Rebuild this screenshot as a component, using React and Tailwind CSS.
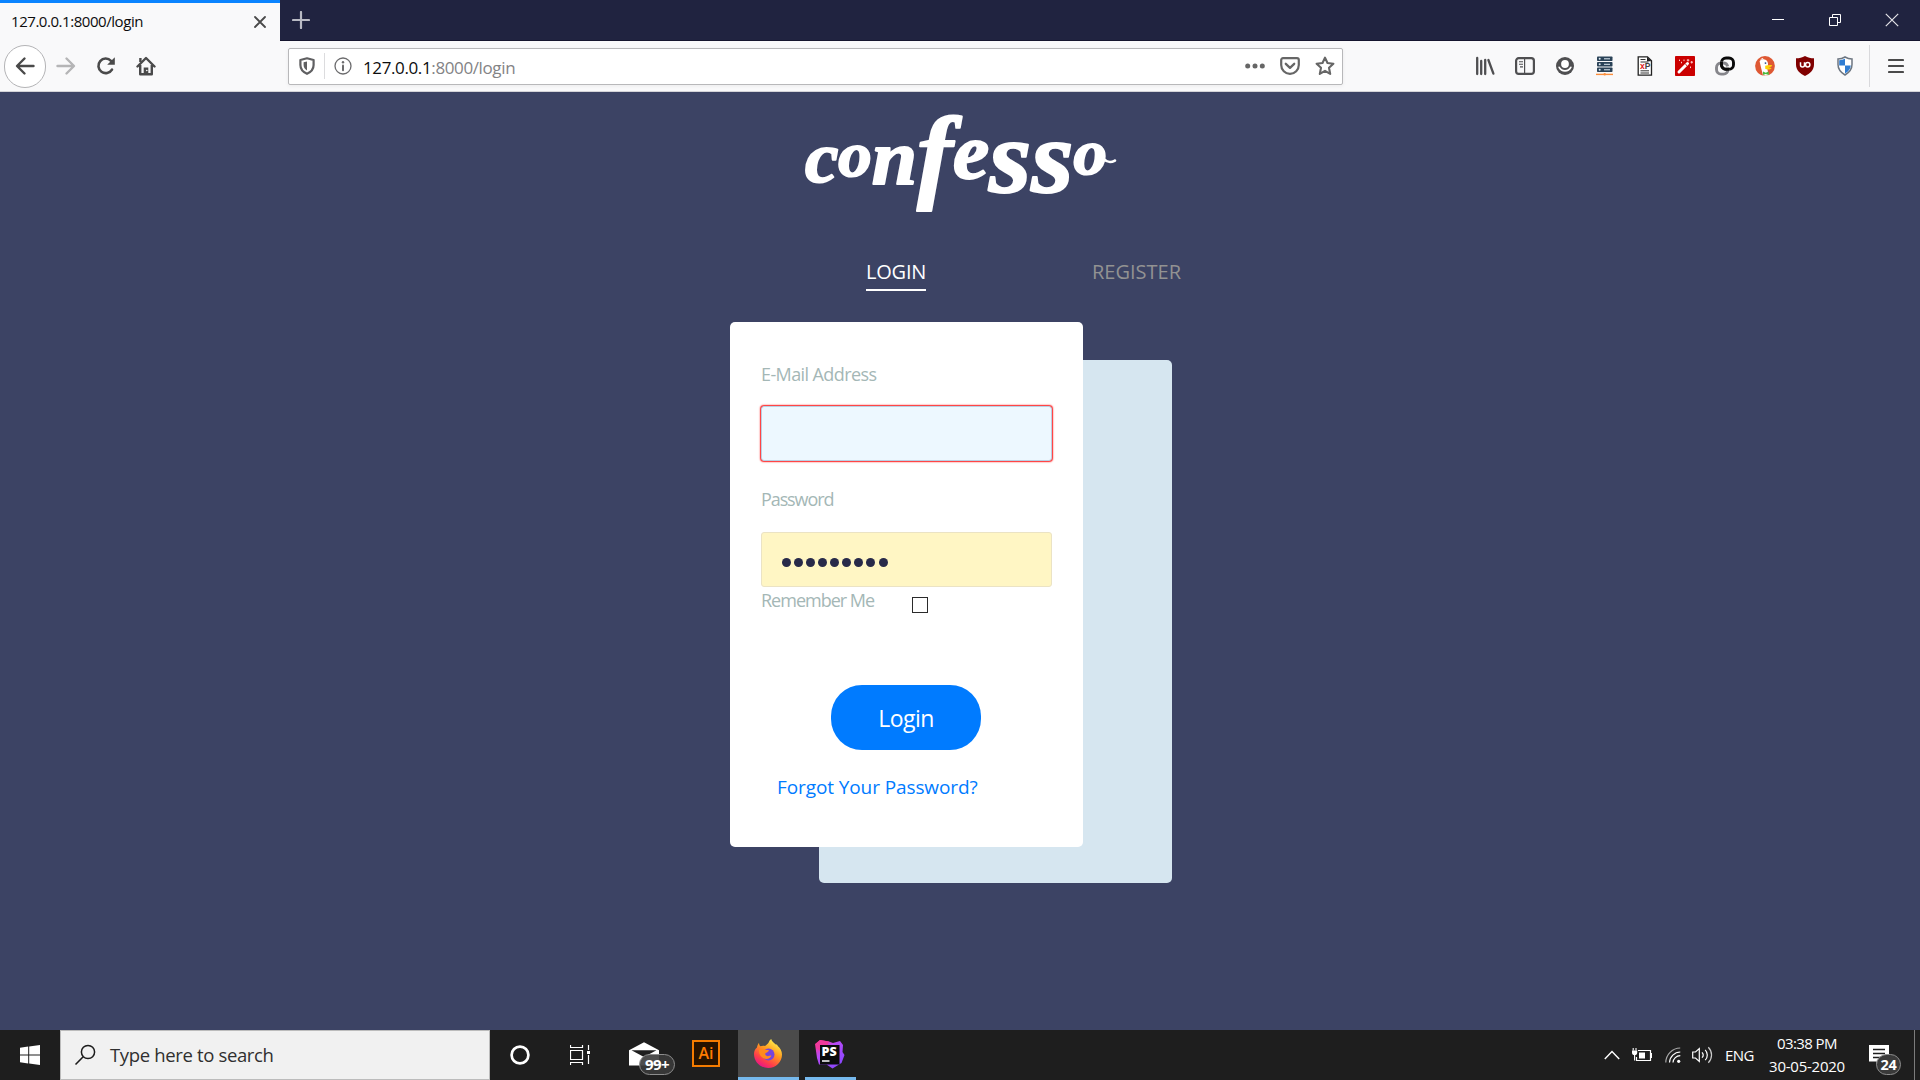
import React from "react";

/* ---------- Browser chrome icons ---------- */

const Svg = ({ w = 20, h = 20, vb, className = "", children }) => (
  <svg width={w} height={h} viewBox={vb || `0 0 ${w} ${h}`} fill="none" className={`shrink-0 ${className}`}>
    {children}
  </svg>
);

const Back = () => (
  <Svg>
    <path d="M18.500 10H2.500M9.500 2.500L2 10l7.500 7.500" stroke="#4a4a4a" strokeWidth="2.400" strokeLinecap="round" strokeLinejoin="round" />
  </Svg>
);
const Forward = () => (
  <Svg>
    <path d="M1.500 10h16M10.500 2.500L18 10l-7.500 7.500" stroke="#b5b5b6" strokeWidth="2.400" strokeLinecap="round" strokeLinejoin="round" />
  </Svg>
);
const Reload = () => (
  <Svg>
    <path d="M16 13.600A7.300 7.300 0 1 1 15 4.800" stroke="#4a4a4a" strokeWidth="2.600" strokeLinecap="round" />
    <path d="M18.800 1.200v7.600h-7.600z" fill="#4a4a4a" />
  </Svg>
);
const Home = () => (
  <Svg>
    <path d="M1.500 10.500L10 2l8.500 8.500" stroke="#4a4a4a" strokeWidth="2.400" strokeLinecap="round" strokeLinejoin="round" />
    <path d="M4.200 9v9.200h11.600V9" stroke="#4a4a4a" strokeWidth="2.400" strokeLinejoin="round" />
    <path d="M3.200 2h2.400v4H3.200z" fill="#4a4a4a" />
    <path d="M7.700 18v-6.500h4.600V18z" fill="#4a4a4a" />
    <circle cx="10.800" cy="14.500" r=".8" fill="#fff" />
  </Svg>
);
const Shield = () => (
  <Svg w={16} h={18}>
    <path d="M8 1.300L14.600 3v5c0 4.200-2.600 7-6.600 8.800C4 15 1.400 12.200 1.400 8V3z" stroke="#5f5f61" strokeWidth="2.200" strokeLinejoin="round" />
    <path d="M8 4.500v9C5.500 12 4.600 10.300 4.600 8V5.300z" fill="#5f5f61" />
  </Svg>
);
const Info = () => (
  <Svg w={18} h={18}>
    <circle cx="9" cy="9" r="8" stroke="#6b6b6d" strokeWidth="1.300" />
    <circle cx="9" cy="5.300" r="1.200" fill="#6b6b6d" />
    <path d="M9 8.500v4.800" stroke="#6b6b6d" strokeWidth="2" strokeLinecap="round" />
  </Svg>
);
const Dots = () => (
  <Svg w={20} h={6}>
    <circle cx="2.700" cy="3" r="2.500" fill="#666" />
    <circle cx="10" cy="3" r="2.500" fill="#666" />
    <circle cx="17.300" cy="3" r="2.500" fill="#666" />
  </Svg>
);
const Pocket = () => (
  <Svg w={20} h={18}>
    <path d="M3 1.200h14a1.800 1.800 0 0 1 1.800 1.800v5a8.800 8.800 0 0 1-17.600 0V3A1.800 1.800 0 0 1 3 1.200z" stroke="#666" strokeWidth="2.200" />
    <path d="M5.800 6.800l4.200 4 4.200-4" stroke="#666" strokeWidth="2.300" strokeLinecap="round" strokeLinejoin="round" />
  </Svg>
);
const Star = () => (
  <Svg>
    <path d="M10 1.600l2.500 5.400 5.900.7-4.400 4 1.200 6.200-5.200-3-5.200 3L6 11.700l-4.400-4L7.500 7z" stroke="#666" strokeWidth="2.100" strokeLinejoin="round" />
  </Svg>
);
const Library = () => (
  <Svg>
    <path d="M2.200 2v16M6.200 5v13M10.200 4v14M13.400 4l5 13.600" stroke="#4f4f51" strokeWidth="2.300" strokeLinecap="round" />
  </Svg>
);
const Sidebar = () => (
  <Svg>
    <rect x="1.100" y="2.200" width="17.800" height="15.600" rx="2.600" stroke="#4f4f51" strokeWidth="2.200" />
    <path d="M9.600 3v14" stroke="#4f4f51" strokeWidth="1.200" />
    <path d="M4 5.800h4M4 8.300h4M5 10.900h3" stroke="#4f4f51" strokeWidth="1.100" />
  </Svg>
);
const Account = () => (
  <Svg>
    <circle cx="10" cy="10" r="9" fill="#4f4f51" />
    <circle cx="10" cy="8" r="3.900" fill="#fff" />
    <path d="M4.200 11.300c1.200 2.200 3.200 3.500 5.800 3.500s4.600-1.300 5.800-3.500" stroke="#fff" strokeWidth="1.700" strokeLinecap="round" />
  </Svg>
);
const Servers = () => (
  <Svg>
    {[0.5, 6, 11.5].map((y) => (
      <g key={y}>
        <rect x="2" y={y} width="15.500" height="4.600" rx=".8" fill="#2a4257" />
        <circle cx="4.700" cy={y + 2.3} r="1" fill="#dce9f2" />
        <path d={`M9 ${y + 2.3}h6`} stroke="#dce9f2" strokeWidth="1" />
      </g>
    ))}
    <path d="M1 18.400h17" stroke="#fb8f3d" strokeWidth="1.400" />
    <circle cx="9.700" cy="18.300" r="1.200" fill="#fb8f3d" />
  </Svg>
);
const PathDoc = () => (
  <Svg>
    <path d="M3.200.8h9.300l4 4v14.400H3.200z" fill="#fff" stroke="#222" strokeWidth="1.300" />
    <path d="M12 .8v4.500h4.500z" fill="#222" />
    <path d="M5.500 3.500h5M5.500 6h8M5.500 14.800h8.500M5.500 17h8.500" stroke="#333" strokeWidth="1" />
    <text x="5" y="13.400" fontSize="8.500" fontWeight="700" fontFamily="Liberation Sans" fill="#e01414">x<tspan fill="#444">P</tspan></text>
  </Svg>
);
const Wand = () => (
  <Svg>
    <rect width="20" height="20" rx=".8" fill="#cb0000" />
    <path d="M4 16l8.500-8.500" stroke="#fff" strokeWidth="3" strokeLinecap="round" />
    <path d="M10.300 8l1.700 1.700" stroke="#cb0000" strokeWidth="1" />
    <path d="M13 3v2.500M11.800 4.200h2.500M16.700 5v2.500M15.500 6.200H18M9 3.500v1.600M6.500 5.800v1.500M15.500 10.500v1.600M4.500 3.600v1.400" stroke="#ffc7c7" strokeWidth="1" />
  </Svg>
);
const ChainLink = () => (
  <Svg>
    <rect x="6.500" y="2" width="12" height="11.300" rx="4.600" stroke="#0a0a0a" strokeWidth="2.900" />
    <path d="M13 13.500a4.600 4.600 0 0 1-4.500 4.600H6A4.600 4.600 0 0 1 1.500 13.500V11.500A4.600 4.600 0 0 1 6 7h2.300a4.600 4.600 0 0 1 4.400 3.300" stroke="#86868b" strokeWidth="2.900" />
    <path d="M6.500 5.800v2.900a4.600 4.600 0 0 0 4.600 4.600H14" stroke="#0a0a0a" strokeWidth="2.900" />
  </Svg>
);
const Duck = () => (
  <Svg>
    <circle cx="10" cy="10" r="9.900" fill="#de5833" />
    <path d="M4.600 5.200C5.600 3 9 2.500 11 4c1.700 1.200 2.200 3 2 5l-.5 4.500 1 5.800c-2 .6-4 .5-5.500 0C7 15 5.500 10 4.600 5.200z" fill="#fff" />
    <path d="M5 3.500L7.500 2l1.500 1.500z" fill="#fff" />
    <path d="M10.200 9.800c2-.7 5-.9 7-.6-.3 1.500-2.200 2-3.600 2.200 1 .4 2.600.2 3 .8-1.200 1.700-4.600 1.700-6.400.6z" fill="#fdd20a" />
    <circle cx="10.500" cy="7.100" r=".9" fill="#2d4f8e" />
    <path d="M8 15.500l2.700 1.200 3-1.300v3.600l-3-1-2.700 1z" fill="#4cba3c" />
  </Svg>
);
const Ublock = () => (
  <Svg>
    <path d="M10 0c2.700 1.500 5.800 2.300 9 2.300v6.200c0 5.500-4 9-9 11.500-5-2.500-9-6-9-11.500V2.300C4.200 2.300 7.300 1.500 10 0z" fill="#800000" />
    <path d="M5.500 6.300V9a2 2 0 0 0 4 0V6.300" stroke="#fff" strokeWidth="1.500" />
    <circle cx="12.700" cy="8.800" r="2.200" stroke="#fff" strokeWidth="1.500" />
  </Svg>
);
const Bitshield = () => (
  <Svg>
    <path d="M10 1c2.300 1.400 4.600 2 7 2v5.500c0 4.700-2.800 8-7 10.500-4.200-2.500-7-5.800-7-10.500V3c2.400 0 4.700-.6 7-2z" fill="#fff" stroke="#6d7681" strokeWidth="1.500" />
    <path d="M10 2.800V9.500H4.200V4.200C6.300 4.100 8.200 3.700 10 2.800zM10 9.500h5.800c-.3 3.400-2.400 6-5.800 8z" fill="#2e7cd2" />
  </Svg>
);

/* ---------- Taskbar icons ---------- */

const Firefox = () => (
  <Svg w={30} h={30}>
    <defs>
      <linearGradient id="ff" x1="24" y1="2" x2="8" y2="28" gradientUnits="userSpaceOnUse">
        <stop offset="0" stopColor="#fff44f" />
        <stop offset=".4" stopColor="#ff9a1f" />
        <stop offset=".75" stopColor="#ff4048" />
        <stop offset="1" stopColor="#e8128a" />
      </linearGradient>
    </defs>
    <path d="M4 8.500C4.300 6.500 5 5 6 4c.1 1.500.6 2.500 1.500 3.300C9 6.700 10.500 6.600 12 7c1.800-1.300 3.400-2.600 4-4.200.5-1.100.9-1.800 2.200-2.800.7 2.600 2.600 3.800 4.600 5.500 1.200-.1 1.800.6 2 1.500C27.300 9.200 29 12 29 15.500 29 23 23 29 15.300 29 7.400 29 1 23 1 15c0-2.700 1-5 3-6.500z" fill="url(#ff)" />
    <circle cx="15.500" cy="15.500" r="6" fill="#7545dc" />
    <path d="M6 10.500c2-.8 4-.7 5.500.3 2 .1 3.600.2 4.500.6-.8 1.600-2.500 2-3.500 2.800-.6.700-.2 2 .9 2.600 2 1.100 3.500-.8 5 0-1 2.700-4.500 4-8 2.400C7 17.500 5.500 14 6 10.500z" fill="#ff8a1d" />
  </Svg>
);
const PhpStorm = () => (
  <Svg w={32} h={32}>
    <defs>
      <linearGradient id="psg" x1="4" y1="2" x2="26" y2="30" gradientUnits="userSpaceOnUse">
        <stop offset="0" stopColor="#ff318c" />
        <stop offset=".35" stopColor="#b74af7" />
        <stop offset="1" stopColor="#8347ff" />
      </linearGradient>
    </defs>
    <path d="M1 5l5-4 9 1.500 4 1.500 7-2 3 4-.5 7 2 3-3 8-9 5.500-6-4H5L3 19z" fill="url(#psg)" />
    <path d="M6 1l9 1.500L13 7l-7 5-4-3 0-4z" fill="#ef3a9c" />
    <rect x="6" y="6" width="19.500" height="19.500" fill="#0b0b0d" />
    <text x="7.500" y="17" fontSize="12.500" fontWeight="800" fontFamily="Open Sans" fill="#fff">PS</text>
    <path d="M8 22h7.500" stroke="#fff" strokeWidth="1.500" />
  </Svg>
);

/* ---------- Logo: a single bouncing-baseline wordmark ---------- */

const letters = [
  ["c", 0, 72],
  ["o", -6, 64],
  ["n", 8, 78],
  ["f", 5, 103],
  ["e", -11, 78],
  ["s", 14, 104],
  ["s", 0, 104],
  ["o", -18, 64],
];
const Logo = () => (
  <svg width="320" height="104" viewBox="800 114 320 104" className="overflow-visible">
    <text
      x="805"
      y="182"
      textLength="302"
      lengthAdjust="spacingAndGlyphs"
      fontFamily="Liberation Serif"
      fontStyle="italic"
      fontWeight="700"
      fill="#fff"
      stroke="#fff"
      strokeWidth="2"
      strokeLinejoin="round"
    >
      {letters.map(([ch, dy, size], i) => (
        <tspan key={i} dy={dy} fontSize={size}>{ch}</tspan>
      ))}
    </text>
    <path d="M1097 152c4 5 8 10 13 10 3 0 4-1 5-1.500" stroke="#fff" strokeWidth="2.600" strokeLinecap="round" fill="none" />
  </svg>
);

const extensions = [Library, Sidebar, Account, Servers, PathDoc, Wand, ChainLink, Duck, Ublock, Bitshield];

function Chrome() {
  return (
    <header className="w-full h-[92px] shrink-0 flex flex-col">
      <div className="h-[41px] flex bg-[#202340]">
        <div className="w-[280px] h-full bg-[#f9f9fa] border-t-[3px] border-[#0a84ff] flex items-center justify-between pl-[11px] pr-[14px]">
          <span className="text-[15px] tracking-[-0.45px] text-[#0c0c0d] leading-5 mb-[3px]">127.0.0.1:8000/login</span>
          <Svg w={12} h={12} className="mb-px">
            <path d="M1 1l10 10M11 1L1 11" stroke="#4a4a4a" strokeWidth="1.800" strokeLinecap="round" />
          </Svg>
        </div>
        <div className="flex-1 flex items-center pl-3 border-b border-[#15152e]">
          <Svg w={18} h={18}>
            <path d="M9 1v16M1 9h16" stroke="#b9bac4" strokeWidth="2.200" strokeLinecap="round" />
          </Svg>
        </div>
        <div className="flex items-center border-b border-[#15152e]">
          <div className="w-[57px] flex justify-center"><Svg w={12} h={12}><path d="M0 5.500h12" stroke="#fff" /></Svg></div>
          <div className="w-[57px] flex justify-center">
            <Svg w={12} h={12}><path d="M.5 3.500h8v8h-8zM3.500 3.500v-3h8v8h-3" stroke="#fff" /></Svg>
          </div>
          <div className="w-[57px] flex justify-center">
            <Svg w={14} h={14}><path d="M.8.8l12.400 12.400M13.200.8L.8 13.200" stroke="#e4e4e8" strokeWidth="1.200" /></Svg>
          </div>
        </div>
      </div>
      <div className="h-[51px] bg-[#f9f9fa] border-b border-[#d4d4d8] flex items-center">
        <div className="ml-[4px] w-[42px] h-[43px] rounded-full border border-[#b4b4b6] bg-white flex items-center justify-center"><Back /></div>
        <div className="ml-[10px] flex gap-[20px] items-center"><Forward /><Reload /><Home /></div>
        <div className="ml-[132px] w-[1055px] h-[37px] bg-white border border-[#b8b8ba] rounded-[2px] shadow-[0_1px_4px_rgba(0,0,0,0.06)] flex items-center pl-[10px] pr-[7px]">
          <Shield />
          <div className="w-px h-[26px] bg-[#dcdcde] ml-[9px] mr-[9px]" />
          <Info />
          <span className="ml-[11px] mt-[3px] text-[17px] tracking-[-0.38px] leading-6 text-[#0c0c0d]">127.0.0.1<span className="text-[#838385]">:8000/login</span></span>
          <div className="ml-auto flex items-center gap-[15px]"><Dots /><Pocket /><Star /></div>
        </div>
        <div className="ml-[132px] flex gap-[20px]">
          {extensions.map((Icon, i) => <Icon key={i} />)}
        </div>
        <div className="w-px h-[42px] bg-[#d9d9dc] ml-[14px]" />
        <Svg w={16} h={16} className="ml-[18px]">
          <path d="M1 2h14M1 8h14M1 14h14" stroke="#4a4a4a" strokeWidth="2.200" strokeLinecap="round" />
        </Svg>
      </div>
    </header>
  );
}

function LoginPage() {
  return (
    <main className="flex-1 min-h-0 bg-[#3c4364] flex flex-col items-center">
      <div className="h-[104px] mt-[22px]"><Logo /></div>
      <nav className="w-[353px] self-start ml-[866px] mt-[36px] h-[37px] flex items-start text-[20px] leading-9">
        <span className="w-[60px] h-[37px] border-b-2 border-white text-white tracking-[-0.2px] whitespace-nowrap">LOGIN</span>
        <span className="ml-[166px] text-[#929292] tracking-[0px]">REGISTER</span>
      </nav>
      <div className="grid mt-[31px] w-[442px] mr-[18px]">
        <div className="col-start-1 row-start-1 w-[353px] h-[523px] mt-[38px] ml-[89px] rounded-[5px] bg-[#d6e6f0]" />
        <form className="col-start-1 row-start-1 w-[353px] h-[525px] rounded-[5px] bg-white z-10 px-[31px] pt-[37px] flex flex-col">
          <label className="text-[18px] leading-[30px] text-[#a4b7b6] tracking-[-0.6px]">E-Mail Address</label>
          <div className="mt-[17px] w-[291px] h-[55px] rounded-[3px] border border-[#b8d0e4] bg-[#edf8ff] shadow-[0_0_1.5px_1px_#ff1a1a]" />
          <label className="mt-[23px] text-[18px] leading-[30px] text-[#a4b7b6] tracking-[-1.1px]">Password</label>
          <div className="mt-[18px] w-[291px] h-[55px] rounded-[3px] border border-[#ebe3c4] bg-[#fff6c4] flex items-center gap-[3.07px] pl-[20px] pt-1.5">
            {Array.from({ length: 9 }, (_, i) => (
              <span key={i} className="w-[9px] h-[9px] rounded-full bg-[#282a49]" />
            ))}
          </div>
          <div className="flex h-[30px] mt-[-2px]">
            <label className="w-[151px] text-[18px] leading-[30px] text-[#a4b7b6] tracking-[-1px]">Remember Me</label>
            <span className="w-4 h-4 mt-[12px] border border-[#2b2b2b] bg-white" />
          </div>
          <div className="mt-[70px] ml-[70px] w-[150px] h-[65px] rounded-[31px] bg-[#007bff] text-white text-[23px] leading-[67px] text-center tracking-[-0.5px]">Login</div>
          <a className="mt-[22px] ml-[16px] text-[19px] leading-[30px] text-[#007bff] tracking-[-0.1px] whitespace-nowrap">Forgot Your Password?</a>
        </form>
      </div>
    </main>
  );
}

function Taskbar() {
  return (
    <footer className="h-[50px] shrink-0 bg-[#1e1e1e] flex text-white">
      <div className="w-[60px] flex items-center justify-center">
        <Svg w={20} h={20}>
          <path d="M0 2.700L8.200 1.600V9.500H0zM9.200 1.400L20 0v9.500H9.200zM0 10.500h8.200v7.900L0 17.300zM9.200 10.500H20V20L9.200 18.600z" fill="#fff" />
        </Svg>
      </div>
      <div className="w-[430px] h-full bg-[#f1f1f1] border border-[#bcbcbc] flex items-center pl-[13px]">
        <Svg w={22} h={22}>
          <circle cx="14" cy="8" r="6.600" stroke="#1c1c1c" strokeWidth="1.500" />
          <path d="M9.200 12.800L1.500 20.500" stroke="#1c1c1c" strokeWidth="1.600" />
        </Svg>
        <span className="ml-[14px] text-[18.5px] text-[#2f2f2f] tracking-[-0.35px] whitespace-nowrap">Type here to search</span>
      </div>
      <div className="w-[60px] flex items-center justify-center">
        <Svg w={20} h={20}><circle cx="10" cy="10" r="8.400" stroke="#fff" strokeWidth="2.700" /></Svg>
      </div>
      <div className="w-[60px] flex items-center justify-center">
        <Svg w={20} h={20}>
          <path d="M.5 5.500h12v9H.5zM.5 0v2.500h12V0M.5 20v-2.500h12V20M18.500 0v5M18.500 10v9" stroke="#fff" strokeWidth="1.200" />
          <rect x="17" y="6" width="3" height="3" fill="#fff" />
        </Svg>
      </div>
      <div className="w-[71px] pl-[19px] pt-[12px] relative">
        <Svg w={30} h={24}>
          <path d="M0 8.200L15 .3l15 7.900V23.500H0z" fill="#fff" />
          <path d="M2.500 8.300h25L15 15z" fill="#1e1e1e" />
        </Svg>
        <span className="absolute left-[29px] top-[24px] w-[36px] h-[21px] rounded-full border border-[#8d8d8d] bg-[#3a3a3a]/90 text-[15px] leading-[19px] font-bold text-center tracking-[-0.5px]">99+</span>
      </div>
      <div className="w-[57px] pl-[11px] pt-[10px]">
        <div className="w-[28px] h-[27px] border-[2px] border-[#f57c00] bg-[#261300] text-[#ff7c00] text-[16px] leading-[23px] font-semibold text-center">Ai</div>
      </div>
      <div className="w-[61px] bg-[#4b4b4b] border-b-[3px] border-[#76b9ed] flex pl-[15px] pt-[9px]"><Firefox /></div>
      <div className="w-[51px] ml-[6px] border-b-[3px] border-[#76b9ed] flex pl-[9px] pt-[9px]"><PhpStorm /></div>
      <div className="ml-auto flex items-center">
        <Svg w={16} h={10}><path d="M.8 9L8 1.500 15.200 9" stroke="#fff" strokeWidth="1.400" /></Svg>
        <Svg w={20} h={14} className="ml-[12px]">
          <path d="M6 2.500h12.500v10H4.500V9" stroke="#fff" strokeWidth="1.200" />
          <path d="M7 4.500h6v6H7z" fill="#fff" />
          <path d="M19.500 5v5M1.200 0v2.500M4 0v2.500M2.600 6v6.500" stroke="#fff" strokeWidth="1.100" />
          <path d="M0 2.500h5.200v2a2.600 2.600 0 0 1-5.200 0z" fill="#fff" />
        </Svg>
        <Svg w={16} h={16} className="ml-[13px]">
          <path d="M.8 15.500A14.700 14.700 0 0 1 15.200 1" stroke="#aaa" strokeWidth="1.200" />
          <path d="M4.500 15.500A11 11 0 0 1 15.300 5M8 15.500A7.300 7.300 0 0 1 15.300 8.700" stroke="#fff" strokeWidth="1.200" />
          <circle cx="13.700" cy="14.300" r="1.600" fill="#fff" />
        </Svg>
        <Svg w={21} h={18} className="ml-[11px]">
          <path d="M.7 6h2.800l3.800-3.400v12.800L3.500 12H.7z" stroke="#fff" strokeWidth="1.200" />
          <path d="M10 6.300a4 4 0 0 1 0 5.400M13.200 3.800a7.500 7.500 0 0 1 0 10.400" stroke="#fff" strokeWidth="1.200" />
          <path d="M16.300 1.200a11 11 0 0 1 0 15.600" stroke="#ccc" strokeWidth="1.200" />
        </Svg>
        <span className="ml-[12px] w-[42px] text-[15px] tracking-[-0.6px]">ENG</span>
        <div className="w-[80px] text-center text-[15px] leading-[23px] whitespace-nowrap">
          <div className="tracking-[-0.6px]">03:38 PM</div>
          <div className="tracking-[-0.25px]">30-05-2020</div>
        </div>
        <div className="relative ml-[22px] w-[45px] h-[50px] pt-[15px]">
          <Svg w={20} h={20}>
            <path d="M0 0h20v16.500h-9L7.500 20v-3.500H0z" fill="#fff" />
            <path d="M4 4.500h12M4 8.500h12M4 12.500h8" stroke="#1e1e1e" strokeWidth="1.300" />
          </Svg>
          <span className="absolute left-[7px] top-[24px] w-[25px] h-[21px] rounded-full border border-[#8d8d8d] bg-[#3a3a3a] text-[14.5px] leading-[19px] font-bold text-center tracking-[-0.3px]">24</span>
        </div>
        <div className="w-px h-[50px] bg-[#7c7c7c] mr-[5px]" />
      </div>
    </footer>
  );
}

export default function App() {
  return (
    <div className="w-[1920px] h-[1080px] overflow-hidden flex flex-col font-['Open_Sans','Noto_Sans',sans-serif]">
      <Chrome />
      <LoginPage />
      <Taskbar />
    </div>
  );
}
